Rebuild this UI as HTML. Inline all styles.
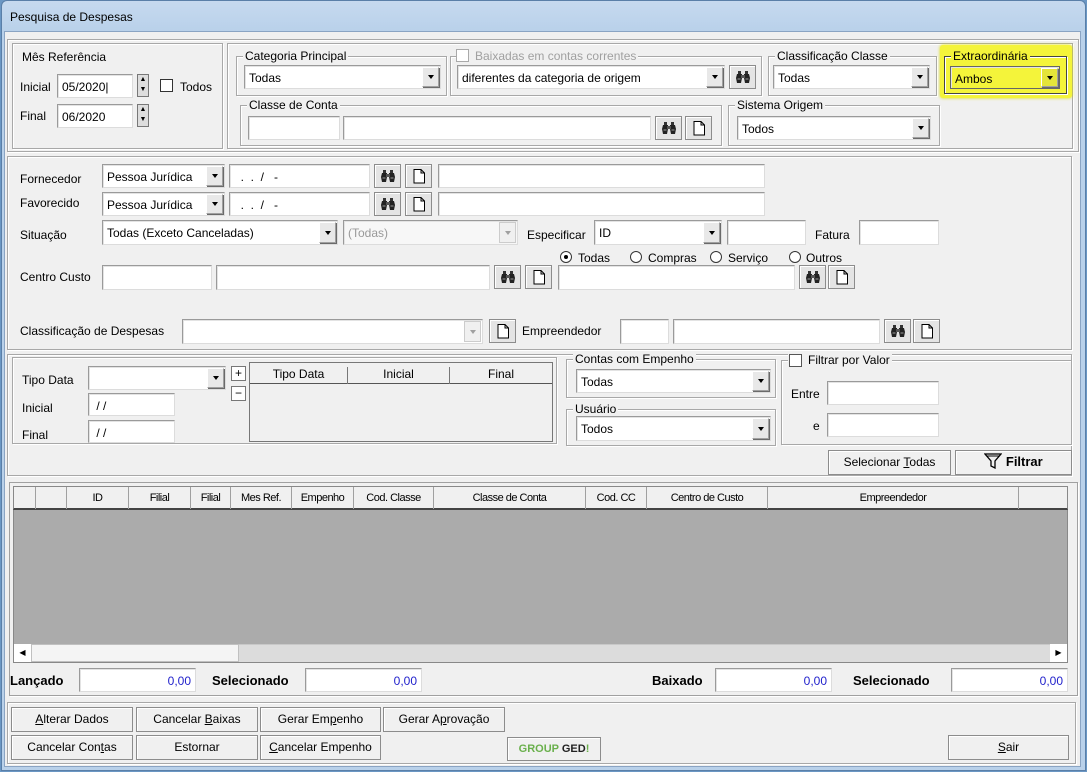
<!DOCTYPE html>
<html><head><meta charset="utf-8"><style>
*{box-sizing:border-box}
body{margin:0;width:1087px;height:772px;overflow:hidden;background:#6b97c4;font:12px "Liberation Sans",Arial,sans-serif;color:#000;position:relative}
.a{position:absolute}
.win{left:1px;top:0;width:1085px;height:771px;border-radius:6px 6px 0 0;background:linear-gradient(#c6d9ef,#b9d1ea 30px);border:1px solid #5a7fa8}
.client{left:4px;top:31px;width:1077px;height:736px;background:#f0f0f0;border:1px solid #8aa4c3}
.t{position:absolute;white-space:nowrap;line-height:14px}
.i{position:absolute;background:#fff;border:1px solid #9a9a9a;border-right-color:#dcdcdc;border-bottom-color:#dcdcdc;box-shadow:inset 1px 1px #e3e3e3;padding:5px 4px 0;line-height:14px;white-space:nowrap;overflow:hidden}
.dd{position:absolute;right:1px;top:1px;bottom:1px;width:17px;background:#e8e8e8;border:1px solid #a0a0a0;border-top-color:#fff;border-left-color:#fff;box-shadow:1px 1px #6a6a6a}
.dd:after{content:"";position:absolute;left:5px;top:50%;margin-top:-2px;border:3.5px solid transparent;border-top:4px solid #000;border-bottom:0}
.dis .dd:after{border-top-color:#a0a0a0}
.g{position:absolute;border:1px solid #a8a8a8;box-shadow:inset 1px 1px #fff,1px 1px #fff}
.gl{position:absolute;top:-8px;left:6px;background:#f0f0f0;padding:0 2px;line-height:14px;white-space:nowrap}
.b{position:absolute;background:#f0f0f0;border:1px solid #8c8c8c;box-shadow:inset 1px 1px #fff;text-align:center;line-height:22px;white-space:nowrap}
.ib{position:absolute;width:27px;height:24px;background:#e4e4e4;border:1px solid #8c8c8c;box-shadow:inset 1px 1px #fff}
.ib svg{position:absolute;left:5px;top:3px}
.cb{position:absolute;width:13px;height:13px;border:1px solid #333;background:#fff}
.rd{position:absolute;width:12px;height:12px;border:1px solid #333;border-radius:50%;background:#fff}
.th{position:absolute;top:0;height:22px;border-right:1px solid #a0a0a0;text-align:center;line-height:22px;font-size:11px;letter-spacing:-.5px}
.v{color:#2222cc;text-align:right}
.bl{position:absolute;font-weight:bold;font-size:13px;white-space:nowrap}
</style></head><body>
<svg width="0" height="0" style="position:absolute"><defs>
<symbol id="bin" viewBox="0 0 16 16"><path d="M3 2h3v3h-3zM10 2h3v3h-3z" fill="#333"/><path d="M2 5h5v4l-1 5h-4l-1-5zM9 5h5l1 4-1 5h-4l-1-5z" fill="#222"/><path d="M6 6h4v3h-4z" fill="#555"/><path d="M2.5 10h3M10.5 10h3" stroke="#999"/></symbol>
<symbol id="doc" viewBox="0 0 16 16"><path d="M3 1.5h7l3.5 3.5v10h-10.5z M10 1.5v3.5h3.5" fill="#fff" stroke="#000"/></symbol>
</defs></svg>
<div class="a win"></div>
<div class="t" style="left:10px;top:10px">Pesquisa de Despesas</div>
<div class="a client"></div>

<!-- top panel -->
<div class="g" style="left:7px;top:39px;width:1072px;height:113px"></div>
<div class="g" style="left:12px;top:43px;width:211px;height:106px"></div>
<div class="t" style="left:22px;top:50px">Mês Referência</div>
<div class="t" style="left:20px;top:80px">Inicial</div>
<div class="i" style="left:57px;top:74px;width:76px;height:24px">05/2020|</div>
<div class="a" style="left:137px;top:74px;width:12px;height:23px;border:1px solid #777;background:#ddd;font-size:7px;line-height:10px;text-align:center">▲<br>▼</div>
<div class="cb" style="left:160px;top:79px"></div>
<div class="t" style="left:180px;top:80px">Todos</div>
<div class="t" style="left:20px;top:109px">Final</div>
<div class="i" style="left:57px;top:104px;width:76px;height:24px">06/2020</div>
<div class="a" style="left:137px;top:104px;width:12px;height:23px;border:1px solid #777;background:#ddd;font-size:7px;line-height:10px;text-align:center">▲<br>▼</div>

<div class="g" style="left:227px;top:43px;width:846px;height:106px"></div>
<div class="g" style="left:236px;top:56px;width:211px;height:40px"><span class="gl">Categoria Principal</span></div>
<div class="i" style="left:244px;top:65px;width:197px;height:24px">Todas<span class="dd"></span></div>
<div class="g" style="left:450px;top:56px;width:312px;height:40px"><span class="gl" style="color:#a0a0a0;padding-left:18px">Baixadas em contas correntes</span></div>
<div class="cb" style="left:456px;top:49px;border-color:#aaa"></div>
<div class="i" style="left:457px;top:65px;width:268px;height:24px">diferentes da categoria de origem<span class="dd"></span></div>
<div class="ib" style="left:729px;top:65px"><svg width="16" height="16"><use href="#bin"/></svg></div>
<div class="g" style="left:768px;top:56px;width:169px;height:40px"><span class="gl">Classificação Classe</span></div>
<div class="i" style="left:773px;top:65px;width:157px;height:24px">Todas<span class="dd"></span></div>
<div class="a" style="left:940px;top:45px;width:132px;height:53px;background:#f4f43a;border-radius:3px;box-shadow:0 0 3px #dede00"></div>
<div class="g" style="left:944px;top:56px;width:123px;height:38px;border-color:#444"><span class="gl" style="background:#f4f43a">Extraordinária</span></div>
<div class="i" style="left:950px;top:66px;width:110px;height:23px;background:#f4f43a;border-color:#666">Ambos<span class="dd" style="background:#e4e43a"></span></div>

<div class="g" style="left:240px;top:105px;width:482px;height:41px"><span class="gl">Classe de Conta</span></div>
<div class="i" style="left:248px;top:116px;width:92px;height:24px"></div>
<div class="i" style="left:343px;top:116px;width:308px;height:24px"></div>
<div class="ib" style="left:655px;top:116px"><svg width="16" height="16"><use href="#bin"/></svg></div>
<div class="ib" style="left:685px;top:116px"><svg width="16" height="16"><use href="#doc"/></svg></div>
<div class="g" style="left:728px;top:105px;width:212px;height:41px"><span class="gl">Sistema Origem</span></div>
<div class="i" style="left:737px;top:116px;width:194px;height:24px">Todos<span class="dd"></span></div>

<!-- second panel -->
<div class="g" style="left:7px;top:156px;width:1065px;height:194px"></div>
<div class="t" style="left:20px;top:172px">Fornecedor</div>
<div class="i" style="left:102px;top:164px;width:123px;height:24px">Pessoa Jurídica<span class="dd"></span></div>
<div class="i" style="left:229px;top:164px;width:141px;height:24px">&nbsp;&nbsp;.&nbsp;&nbsp;.&nbsp;&nbsp;/&nbsp;&nbsp;&nbsp;-</div>
<div class="ib" style="left:374px;top:164px"><svg width="16" height="16"><use href="#bin"/></svg></div>
<div class="ib" style="left:405px;top:164px"><svg width="16" height="16"><use href="#doc"/></svg></div>
<div class="i" style="left:438px;top:164px;width:327px;height:24px"></div>
<div class="t" style="left:20px;top:196px">Favorecido</div>
<div class="i" style="left:102px;top:192px;width:123px;height:24px">Pessoa Jurídica<span class="dd"></span></div>
<div class="i" style="left:229px;top:192px;width:141px;height:24px">&nbsp;&nbsp;.&nbsp;&nbsp;.&nbsp;&nbsp;/&nbsp;&nbsp;&nbsp;-</div>
<div class="ib" style="left:374px;top:192px"><svg width="16" height="16"><use href="#bin"/></svg></div>
<div class="ib" style="left:405px;top:192px"><svg width="16" height="16"><use href="#doc"/></svg></div>
<div class="i" style="left:438px;top:192px;width:327px;height:24px"></div>
<div class="t" style="left:20px;top:228px">Situação</div>
<div class="i" style="left:102px;top:220px;width:236px;height:25px">Todas (Exceto Canceladas)<span class="dd"></span></div>
<div class="i dis" style="left:343px;top:220px;width:175px;height:25px;color:#999;background:#f7f7f7">(Todas)<span class="dd" style="background:#f0f0f0;box-shadow:none;border-color:#ccc"></span></div>
<div class="t" style="left:527px;top:228px">Especificar</div>
<div class="i" style="left:594px;top:220px;width:128px;height:25px">ID<span class="dd"></span></div>
<div class="i" style="left:727px;top:220px;width:79px;height:25px"></div>
<div class="t" style="left:815px;top:228px">Fatura</div>
<div class="i" style="left:859px;top:220px;width:80px;height:25px"></div>
<div class="rd" style="left:560px;top:251px"><span class="a" style="left:3px;top:3px;width:4px;height:4px;border-radius:50%;background:#000"></span></div>
<div class="t" style="left:578px;top:251px">Todas</div>
<div class="rd" style="left:630px;top:251px"></div><div class="t" style="left:648px;top:251px">Compras</div>
<div class="rd" style="left:710px;top:251px"></div><div class="t" style="left:728px;top:251px">Serviço</div>
<div class="rd" style="left:789px;top:251px"></div><div class="t" style="left:806px;top:251px">Outros</div>
<div class="t" style="left:20px;top:270px">Centro Custo</div>
<div class="i" style="left:102px;top:265px;width:110px;height:25px"></div>
<div class="i" style="left:216px;top:265px;width:274px;height:25px"></div>
<div class="ib" style="left:494px;top:265px"><svg width="16" height="16"><use href="#bin"/></svg></div>
<div class="ib" style="left:525px;top:265px"><svg width="16" height="16"><use href="#doc"/></svg></div>
<div class="i" style="left:558px;top:265px;width:237px;height:25px"></div>
<div class="ib" style="left:799px;top:265px"><svg width="16" height="16"><use href="#bin"/></svg></div>
<div class="ib" style="left:828px;top:265px"><svg width="16" height="16"><use href="#doc"/></svg></div>
<div class="t" style="left:20px;top:324px">Classificação de Despesas</div>
<div class="i dis" style="left:182px;top:319px;width:301px;height:25px"><span class="dd" style="background:#f0f0f0;box-shadow:none;border-color:#ccc"></span></div>
<div class="ib" style="left:489px;top:319px"><svg width="16" height="16"><use href="#doc"/></svg></div>
<div class="t" style="left:522px;top:324px">Empreendedor</div>
<div class="i" style="left:620px;top:319px;width:49px;height:25px"></div>
<div class="i" style="left:673px;top:319px;width:207px;height:25px"></div>
<div class="ib" style="left:884px;top:319px"><svg width="16" height="16"><use href="#bin"/></svg></div>
<div class="ib" style="left:913px;top:319px"><svg width="16" height="16"><use href="#doc"/></svg></div>

<!-- third panel -->
<div class="g" style="left:7px;top:354px;width:1065px;height:122px"></div>
<div class="g" style="left:12px;top:357px;width:545px;height:87px"></div>
<div class="t" style="left:22px;top:373px">Tipo Data</div>
<div class="i" style="left:88px;top:366px;width:138px;height:24px"><span class="dd"></span></div>
<div class="a" style="left:231px;top:366px;width:15px;height:15px;border:1px solid #777;background:#fff;text-align:center;line-height:12px">+</div>
<div class="a" style="left:231px;top:386px;width:15px;height:15px;border:1px solid #777;background:#fff;text-align:center;line-height:12px">−</div>
<div class="a" style="left:249px;top:362px;width:304px;height:80px;border:1px solid #777;background:#f0f0f0">
 <div class="a" style="left:0;top:0;width:302px;height:21px;border-bottom:1px solid #555"></div>
 <div class="t" style="left:0;top:4px;width:98px;text-align:center;border-right:1px solid #777;height:17px">Tipo Data</div>
 <div class="t" style="left:98px;top:4px;width:102px;text-align:center;border-right:1px solid #777;height:17px">Inicial</div>
 <div class="t" style="left:200px;top:4px;width:102px;text-align:center">Final</div>
</div>
<div class="t" style="left:22px;top:401px">Inicial</div>
<div class="i" style="left:88px;top:393px;width:87px;height:23px">&nbsp;/ /</div>
<div class="t" style="left:22px;top:428px">Final</div>
<div class="i" style="left:88px;top:420px;width:87px;height:23px">&nbsp;/ /</div>
<div class="g" style="left:566px;top:359px;width:210px;height:39px"><span class="gl">Contas com Empenho</span></div>
<div class="i" style="left:576px;top:369px;width:195px;height:24px">Todas<span class="dd"></span></div>
<div class="g" style="left:566px;top:409px;width:210px;height:37px"><span class="gl">Usuário</span></div>
<div class="i" style="left:576px;top:416px;width:195px;height:25px">Todos<span class="dd"></span></div>
<div class="g" style="left:781px;top:360px;width:291px;height:85px"><span class="gl" style="padding-left:20px">Filtrar por Valor</span></div>
<div class="cb" style="left:789px;top:354px;border-color:#555"></div>
<div class="t" style="left:791px;top:387px">Entre</div>
<div class="i" style="left:827px;top:381px;width:112px;height:24px"></div>
<div class="t" style="left:813px;top:419px">e</div>
<div class="i" style="left:827px;top:413px;width:112px;height:24px"></div>
<div class="b" style="left:828px;top:450px;width:123px;height:25px">Selecionar <u>T</u>odas</div>
<div class="b" style="left:955px;top:450px;width:117px;height:25px;font-weight:bold;font-size:13px"><svg width="18" height="16" viewBox="0 0 18 16" style="vertical-align:-3px"><path d="M1 1h16l-6 7v7l-4-2V8z" fill="none" stroke="#000" stroke-width="1.3"/><path d="M3 3h12" stroke="#000"/></svg> Filtrar</div>

<!-- grid -->
<div class="a" style="left:9px;top:482px;width:1069px;height:214px;border:1px solid #a0a0a0;box-shadow:1px 1px #fff"></div>
<div class="a" style="left:13px;top:486px;width:1055px;height:177px;background:#ababab;border:1px solid #888"></div>
<div class="a" style="left:13px;top:486px;width:1055px;height:24px;background:#f0f0f0;border:1px solid #888;border-bottom:2px solid #444">
 <div class="th" style="left:0;width:22px"></div>
 <div class="th" style="left:22px;width:31px"></div>
 <div class="th" style="left:53px;width:62px">ID</div>
 <div class="th" style="left:115px;width:62px">Filial</div>
 <div class="th" style="left:177px;width:40px">Filial</div>
 <div class="th" style="left:217px;width:61px">Mes Ref.</div>
 <div class="th" style="left:278px;width:62px">Empenho</div>
 <div class="th" style="left:340px;width:80px">Cod. Classe</div>
 <div class="th" style="left:420px;width:152px">Classe de Conta</div>
 <div class="th" style="left:572px;width:61px">Cod. CC</div>
 <div class="th" style="left:633px;width:121px">Centro de Custo</div>
 <div class="th" style="left:754px;width:251px">Empreendedor</div>
</div>
<div class="a" style="left:14px;top:644px;width:1053px;height:18px;background:#dcdcdc;border-top:1px solid #c8c8c8"></div>
<div class="a" style="left:14px;top:644px;width:17px;height:18px;background:#fff;font-size:8px;line-height:18px;text-align:center">◀</div>
<div class="a" style="left:31px;top:644px;width:208px;height:18px;background:#f4f4f4;border:1px solid #c0c0c0"></div>
<div class="a" style="left:1050px;top:644px;width:17px;height:18px;background:#fff;font-size:8px;line-height:18px;text-align:center">▶</div>
<div class="bl" style="left:10px;top:673px">Lançado</div>
<div class="i v" style="left:79px;top:668px;width:117px;height:24px">0,00</div>
<div class="bl" style="left:212px;top:673px">Selecionado</div>
<div class="i v" style="left:305px;top:668px;width:117px;height:24px">0,00</div>
<div class="bl" style="left:652px;top:673px">Baixado</div>
<div class="i v" style="left:715px;top:668px;width:117px;height:24px">0,00</div>
<div class="bl" style="left:853px;top:673px">Selecionado</div>
<div class="i v" style="left:951px;top:668px;width:117px;height:24px">0,00</div>

<!-- bottom -->
<div class="g" style="left:7px;top:702px;width:1069px;height:62px"></div>
<div class="b" style="left:11px;top:707px;width:122px;height:25px"><u>A</u>lterar Dados</div>
<div class="b" style="left:136px;top:707px;width:122px;height:25px">Cancelar <u>B</u>aixas</div>
<div class="b" style="left:260px;top:707px;width:121px;height:25px">Gerar Em<u>p</u>enho</div>
<div class="b" style="left:383px;top:707px;width:122px;height:25px">Gerar A<u>p</u>rovação</div>
<div class="b" style="left:11px;top:735px;width:122px;height:25px">Cancelar Con<u>t</u>as</div>
<div class="b" style="left:136px;top:735px;width:122px;height:25px">Estornar</div>
<div class="b" style="left:260px;top:735px;width:121px;height:25px"><u>C</u>ancelar Empenho</div>
<div class="b" style="left:507px;top:737px;width:94px;height:24px;font-size:11px;font-weight:bold"><span style="color:#6ab04c">GROUP</span> <span style="color:#222">GED</span><span style="color:#6ab04c">!</span></div>
<div class="b" style="left:948px;top:735px;width:121px;height:25px"><u>S</u>air</div>
</body></html>
